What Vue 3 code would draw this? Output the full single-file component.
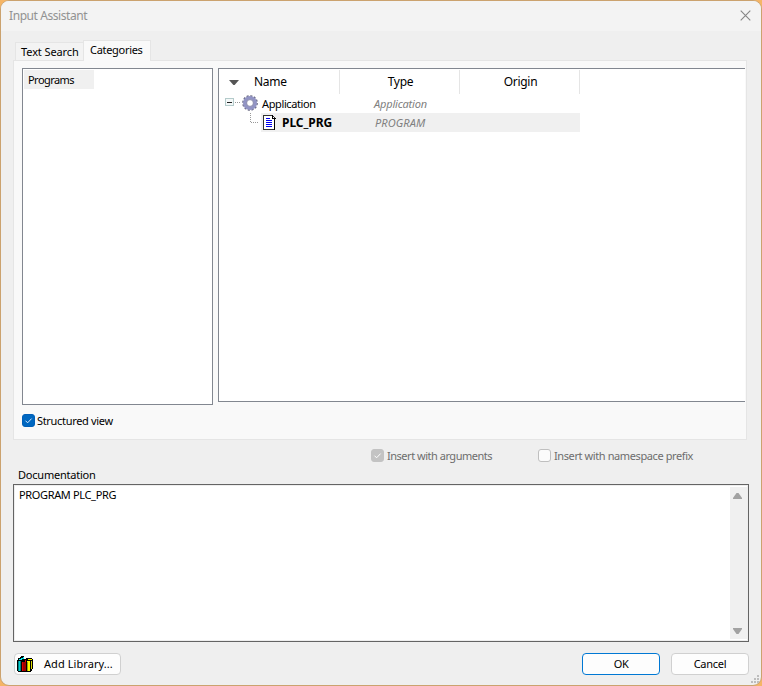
<script setup>
import { ref } from 'vue'

const columns = ['Type', 'Origin']
const structured = ref(true)
const documentation = 'PROGRAM PLC_PRG'
</script>

<template>
  <div class="desktop">
    <section class="window">
      <header class="titlebar">
        <span class="title">Input Assistant</span>
        <svg class="close" width="11" height="11" viewBox="0 0 11 11"><path d="M.7.7l9.6 9.6M10.3.7L.7 10.3" stroke="#858585" stroke-width="1.1" fill="none" /></svg>
      </header>

      <nav class="tabs">
        <div class="tab search"><span>Text Search</span></div>
        <div class="tab active"><span>Categories</span></div>
      </nav>

      <main class="panel">
        <div class="lists">
          <div class="categories"><div class="category"><span>Programs</span></div></div>
          <div class="tree">
            <div class="head">
              <div class="cell first">
                <svg width="10" height="5" viewBox="0 0 10 5"><path d="M0 0h10L5.6 5H4.4z" fill="#555" /></svg>
                <span class="name">Name</span>
              </div>
              <div v-for="c in columns" :key="c" class="cell"><span :class="c.toLowerCase()">{{ c }}</span></div>
            </div>
            <div class="row">
              <svg class="branch" width="42" height="19" viewBox="0 0 42 19" shape-rendering="crispEdges">
                <rect x="6.5" y="4.500" width="8" height="7" fill="#f4f8f8" stroke="#b4cbcb" />
                <path d="M8 8.500h5" stroke="#222" />
                <path d="M16 8.500h5" stroke="#999" stroke-dasharray="1 1" />
                <g shape-rendering="geometricPrecision">
                  <circle cx="31" cy="9" r="7.100" fill="none" stroke="#686880" stroke-width="1.500" stroke-dasharray="2.100 1.620" />
                  <circle cx="31" cy="9" r="5.100" fill="none" stroke="#9294c4" stroke-width="3.800" />
                  <circle cx="31" cy="9" r="3.400" fill="#fff" stroke="#737399" stroke-width=".8" />
                </g>
              </svg>
              <span class="app">Application</span>
              <em class="apptype">Application</em>
            </div>
            <div class="row">
              <svg class="branch" width="42" height="19" viewBox="0 0 42 19" shape-rendering="crispEdges">
                <path d="M31.500 0v9M32 9.500h8" stroke="#999" stroke-dasharray="1 1" fill="none" />
              </svg>
              <div class="selected">
                <svg class="doc" width="14" height="17" viewBox="0 0 14 17" shape-rendering="crispEdges">
                  <path d="M1.500 1.500h9l2 2v12h-11z" fill="#fff" stroke="#333" />
                  <path d="M10.500 1v3h3M12.500 4v12" stroke="#000" fill="none" />
                  <path d="M4 4.500h4M4 6.500h6M4 8.500h6M4 10.500h6M4 12.500h6" stroke="#0000f0" />
                </svg>
                <strong>PLC_PRG</strong>
                <em class="prgtype">PROGRAM</em>
              </div>
            </div>
          </div>
        </div>
        <div class="check structured" @click="structured = !structured">
          <i class="box on"><svg v-if="structured" width="13" height="13" viewBox="0 0 13 13"><path d="M3.500 6.700l2.100 2.100 4-4.200" stroke="#d8eaff" fill="none" /></svg></i>
          <span>Structured view</span>
        </div>
      </main>

      <div class="options">
        <div class="check args">
          <i class="box dim"><svg width="13" height="13" viewBox="0 0 13 13"><path d="M3.500 6.700l2.100 2.100 4-4.200" stroke="#fff" fill="none" /></svg></i>
          <span>Insert with arguments</span>
        </div>
        <div class="check prefix"><i class="box"></i><span>Insert with namespace prefix</span></div>
      </div>

      <div class="doclabel"><span>Documentation</span></div>
      <div class="docbox">
        <span class="doctext">{{ documentation }}</span>
        <div class="scroll">
          <svg width="9" height="6" viewBox="0 0 9 6"><path d="M3.500 0h2L9 5v1H0V5z" fill="#a2a2a2" /></svg>
          <svg width="9" height="6" viewBox="0 0 9 6"><path d="M0 0h9v1L5.500 6h-2L0 1z" fill="#a2a2a2" /></svg>
        </div>
      </div>

      <footer class="buttons">
        <button class="btn library">
          <svg width="17" height="16" viewBox="0 0 17 16" shape-rendering="crispEdges">
            <path d="M0 4h1V2h2V1h1V0h3v3h2V2h6v1h1v10h-1v2h-1v1H1v-1H0z" fill="#000" />
            <path d="M1 5h3v10H1z" fill="#008080" /><path d="M2 5h1v10H2z" fill="#00d0d0" />
            <path d="M2 3h2V2h2V1h1v2H5v1H2z" fill="#00f0f0" />
            <path d="M5 6h4v9H5z" fill="#a00000" /><path d="M5 6h1v9H5zM8 4h1v2H8z" fill="#e00000" />
            <path d="M10 5h3v10h-3z" fill="#ff0" /><path d="M11 3h4v1h-4z" fill="#ff0" />
            <path d="M14 5h1v8h-1z" fill="#dede00" /><path d="M10 6h1v9h-1z" fill="#a0a000" />
          </svg>
          <span>Add Library...</span>
        </button>
        <button class="btn ok"><span>OK</span></button>
        <button class="btn cancel"><span>Cancel</span></button>
      </footer>
      <svg class="grip" width="8" height="8" viewBox="0 0 8 8"><path d="M6 0h2v2H6zM3 3h2v2H3zM6 3h2v2H6zM0 6h2v2H0zM3 6h2v2H3zM6 6h2v2H6z" fill="#bdbdbd" /></svg>
    </section>
  </div>
</template>

<style>
body { margin: 0; background: #efb067; overflow: hidden; }
</style>

<style scoped>
* { box-sizing: border-box; }
.desktop { width: 762px; height: 686px; background: #f5b566; font: 11px/14px "Noto Sans", "DejaVu Sans", sans-serif; color: #000; }
.window { position: relative; width: 762px; height: 686px; border: 1px solid #cba26e; border-radius: 9px; background: #efefef; overflow: hidden; display: flex; flex-direction: column; }
span, em, strong { white-space: nowrap; display: block; }
svg { display: block; flex: none; }
.titlebar { height: 30px; flex: none; background: #f3f3f3; display: flex; justify-content: space-between; padding: 8px 10px 0 8px; color: #929292; }
.title { font-size: 12px; letter-spacing: -.42px; }
.close { margin-top: 1px; }
.tabs { height: 29px; flex: none; padding: 9px 0 0 14px; display: flex; align-items: flex-end; }
.tab { border: 1px solid #e5e5e5; border-bottom: 0; background: #f3f3f3; }
.search { width: 68px; height: 18px; padding: 2px 0 0 5px; border-right: 0; letter-spacing: -.1px; }
.active { width: 68px; height: 21px; padding: 2px 0 0 6px; background: #f9f9f9; margin-bottom: -1px; z-index: 1; letter-spacing: -.3px; }
.panel { width: 734px; height: 380px; flex: none; margin-left: 12px; border: 1px solid #e5e5e5; background: #f9f9f9; padding: 7px 0 0 8px; }
.lists { display: flex; gap: 5px; height: 337px; }
.categories { width: 191px; height: 337px; border: 1px solid #828790; background: #fff; padding: 1px; }
.category { width: 70px; height: 19px; background: #f0f0f0; padding: 3px 0 0 4px; letter-spacing: -.55px; }
.tree { width: 527px; height: 334px; border: 1px solid #828790; border-right: 0; background: #fff; padding-top: 1px; }
.head { display: flex; height: 24px; font-size: 12px; line-height: 24px; }
.cell { width: 120px; height: 24px; border-right: 1px solid #e5e5e5; display: flex; justify-content: center; padding-left: 2px; }
.origin, .type { letter-spacing: -.3px; }
.name { letter-spacing: -.3px; }
.cell.first { width: 121px; justify-content: flex-start; align-items: center; padding-left: 10px; gap: 15px; }
.row { display: flex; height: 19px; line-height: 20px; }
.app { width: 112px; margin-left: 1px; letter-spacing: -.38px; }
em { color: #808080; letter-spacing: -.18px; }
.prgtype { letter-spacing: .1px; }
.selected { width: 319px; height: 19px; background: #f0f0f0; display: flex; }
.doc { margin: 1px 0 0 1px; }
strong { margin-left: 6px; width: 93px; font-weight: 700; font-size: 12px; letter-spacing: -.05px; }
.check { display: flex; gap: 3px; }
.box { width: 13px; height: 13px; border: 1px solid #bfbfbf; border-radius: 3px; background: #fbfbfb; flex: none; }
.box svg { margin: -1px; }
.box.on { border-color: #005fb8; background: #0067c0; }
.box.dim { border-color: #c3c3c3; background: #c3c3c3; }
.structured { margin-top: 9px; gap: 2px; letter-spacing: -.32px; }
.options { display: flex; height: 28px; flex: none; padding: 9px 0 0 370px; color: #6d6d6d; letter-spacing: -.48px; }
.args { width: 167px; }
.prefix { letter-spacing: -.4px; }
.doclabel { height: 16px; margin-left: 17px; flex: none; letter-spacing: -.22px; }
.docbox { width: 736px; height: 158px; flex: none; margin: 0 0 0 12px; border: 1px solid #646464; background: #fff; box-shadow: inset 0 0 0 1px #eee; display: flex; justify-content: space-between; padding: 2px 1px 2px 5px; }
.doctext { margin-top: 1px; letter-spacing: -.35px; }
.scroll { width: 17px; background: #f0f0f0; display: flex; flex-direction: column; justify-content: space-between; padding: 6px 5px 5px 3px; }
.buttons { display: flex; padding: 11px 0 0 13px; }
.btn { height: 22px; border: 1px solid #d0d0d0; border-radius: 4px; background: #fdfdfd; font: inherit; color: inherit; padding: 0; display: flex; align-items: center; justify-content: center; }
.library { width: 107px; justify-content: flex-start; padding-left: 2px; gap: 10px; letter-spacing: .07px; }
.library span { margin-top: -1px; }
.ok { width: 78px; margin-left: 461px; border-color: #0078d4; letter-spacing: -.4px; }
.cancel { width: 78px; margin-left: 11px; letter-spacing: -.25px; }
.grip { position: absolute; right: 2px; bottom: 2px; }
</style>
